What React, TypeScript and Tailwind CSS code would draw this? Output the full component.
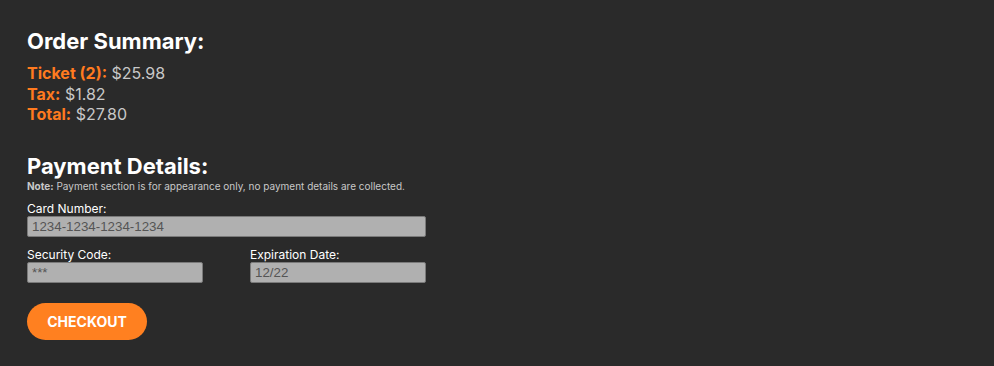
import React from "react";

export default function App() {
  const inputCls =
    "block h-[21px] w-full rounded-[2px] border border-[#7a7a7a] bg-[#b0b0b0] px-[4px] font-['Liberation_Sans',Arial,sans-serif] text-[13.33px] text-[#555] placeholder:text-[#555] outline-none";
  return (
    <div className="min-h-[366px] w-full bg-[#2a2a2a] px-[27px] pt-[26px] font-['Inter',sans-serif]">
      <h2 className="text-[22px] font-bold leading-[30px] text-white">Order Summary:</h2>
      <div className="mt-[7px] text-[16px] leading-[20.5px] text-[#c8c8c8]">
        <div><span className="font-bold text-[#ff7a1f]">Ticket (2):</span> $25.98</div>
        <div><span className="font-bold text-[#ff7a1f]">Tax:</span> $1.82</div>
        <div><span className="font-bold text-[#ff7a1f]">Total:</span> $27.80</div>
      </div>
      <h2 className="mt-[27px] text-[22px] font-bold leading-[28px] text-white">Payment Details:</h2>
      <p className="text-[10px] leading-[12px] text-[#c8c8c8]"><span className="font-bold">Note:</span> Payment section is for appearance only, no payment details are collected.</p>
      <div className="w-[399px]">
        <label className="mt-[10px] block text-[12px] leading-[14px] text-white">Card Number:</label>
        <input readOnly placeholder="1234-1234-1234-1234" className={inputCls} />
        <div className="mt-[11px] flex justify-between">
          <div className="w-[176px]">
            <label className="block text-[12px] leading-[14px] text-white">Security Code:</label>
            <input readOnly placeholder="***" className={inputCls} />
          </div>
          <div className="w-[176px]">
            <label className="block text-[12px] leading-[14px] text-white">Expiration Date:</label>
            <input readOnly placeholder="12/22" className={inputCls} />
          </div>
        </div>
      </div>
      <button className="mt-[20px] h-[37px] w-[120px] rounded-full bg-[#ff8020] text-[14px] font-bold text-white">CHECKOUT</button>
    </div>
  );
}
